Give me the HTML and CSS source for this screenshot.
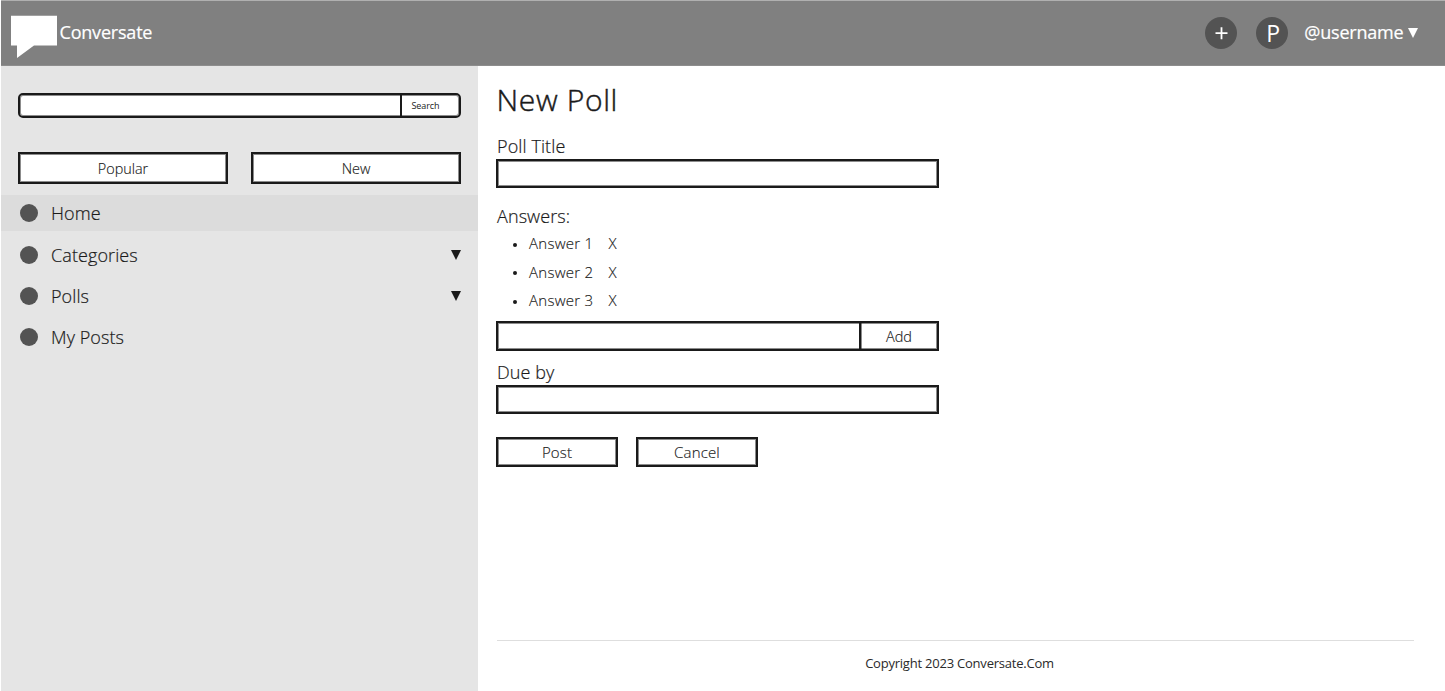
FILE: index.html
```html
<!DOCTYPE html>
<html lang="en">
<head>
<meta charset="utf-8">
<title>Conversate - New Poll</title>
<link rel="stylesheet" href="styles.css">
</head>
<body>
<header class="topbar">
  <svg class="logo" width="48" height="44" viewBox="0 0 48 44"><path d="M1 .7H47V30.5H24L7 43V30.5H1Z" fill="#fff"/></svg>
  <span class="brand">Conversate</span>
  <span class="round add-icon"><svg width="32" height="32" viewBox="0 0 32 32"><path d="M10.5 16.2H22.5M16.5 10.2V22.2" stroke="#fff" stroke-width="1.8"/></svg></span>
  <span class="round avatar">P</span>
  <span class="user">@username</span>
  <svg class="caret" width="10" height="10" viewBox="0 0 10 10"><path d="M0 0H10L5 10Z" fill="#fff"/></svg>
</header>
<div class="layout">
  <aside class="sidebar">
    <div class="search box"><div class="search-field"></div><div class="search-btn">Search</div></div>
    <div class="tabs"><div class="box tab">Popular</div><div class="box tab">New</div></div>
    <nav class="nav">
      <div class="item active"><i class="dot"></i><span>Home</span></div>
      <div class="item"><i class="dot"></i><span>Categories</span><svg class="arrow" width="10" height="10" viewBox="0 0 10 10"><path d="M0 0H10L5 10Z" fill="#1a1a1a"/></svg></div>
      <div class="item"><i class="dot"></i><span>Polls</span><svg class="arrow" width="10" height="10" viewBox="0 0 10 10"><path d="M0 0H10L5 10Z" fill="#1a1a1a"/></svg></div>
      <div class="item"><i class="dot"></i><span>My Posts</span></div>
    </nav>
  </aside>
  <main class="main">
    <h1 class="title">New Poll</h1>
    <div class="label title-label">Poll Title</div>
    <div class="box field"></div>
    <div class="label answers-label">Answers:</div>
    <ul class="answers">
      <li><i></i><span class="answer">Answer 1</span><span>X</span></li>
      <li><i></i><span class="answer">Answer 2</span><span>X</span></li>
      <li><i></i><span class="answer">Answer 3</span><span>X</span></li>
    </ul>
    <div class="box add-row"><div class="add-field"></div><div class="add-btn">Add</div></div>
    <div class="label due-label">Due by</div>
    <div class="box field"></div>
    <div class="actions"><div class="box action">Post</div><div class="box action">Cancel</div></div>
    <footer class="footer">Copyright 2023 Conversate.Com</footer>
  </main>
</div>
</body>
</html>
```
FILE: styles.css
```css
* { box-sizing: border-box; }
body { margin: 0; width: 1445px; height: 691px; overflow: hidden; background: #fff; color: #1a1a1a; font-family: "Open Sans", sans-serif; font-weight: 300; }
.topbar { height: 66px; margin-left: 1px; background: #808080; border-top: 1px solid #b0b0b0; border-bottom: 1px solid #8d8d8d; display: flex; align-items: flex-start; padding: 0 27.5px 0 9px; color: #fff; font-weight: 400; }
.logo { margin-top: 14px; }
.brand, .user { font-size: 18px; line-height: 26px; margin-top: 18px; letter-spacing: -.2px; -webkit-text-stroke: .2px #fff; }
.brand { margin-left: 1.5px; }
.round { width: 32px; height: 32px; border-radius: 50%; background: #535353; margin-top: 16px; }
.add-icon { margin-left: auto; }
.avatar { margin-left: 19.5px; font-size: 23px; line-height: 33px; text-align: center; padding-left: 2px; }
.user { margin-left: 16px; }
.caret { margin: 27px 0 0 4px; }
.layout { display: flex; height: 625px; }
.sidebar { width: 477px; margin-left: 1px; background: #e5e5e5; }
.box { background: #fff; border: 2px solid #1a1a1a; box-shadow: inset 0 0 0 1px rgba(26,26,26,.5); }
.search { display: flex; margin: 27.4px 17px 0; height: 25px; border-radius: 5px; }
.search-field { flex: 1; }
.search-btn { width: 59.5px; border-left: 2px solid #1a1a1a; padding-left: 10px; font-size: 9px; line-height: 21px; font-weight: 400; letter-spacing: -.1px; }
.tabs { display: flex; gap: 23px; margin: 33.6px 17px 0; }
.tab { flex: 1; height: 32px; font-size: 14.4px; line-height: 29px; text-align: center; }
.tab, .add-btn, .action, .answers { -webkit-text-stroke: .15px #1a1a1a; }
.nav { margin-top: 11px; display: grid; gap: 5px; }
.item { height: 36.4px; display: flex; align-items: center; font-size: 18px; letter-spacing: .09px; padding: 0 17.5px 0 19px; -webkit-text-stroke: .2px #1a1a1a; }
.item.active { background: #dcdcdc; }
.dot { width: 18px; height: 18px; border-radius: 50%; background: #535353; margin-right: 13px; }
.arrow { margin-left: auto; }
.main { width: 936px; padding-left: 19px; display: flex; flex-direction: column; }
.title { margin: 14px 0 0 -.5px; font-size: 30px; line-height: 40px; font-weight: 300; letter-spacing: .65px; -webkit-text-stroke: .45px #1a1a1a; }
.label { font-size: 18px; line-height: 24px; letter-spacing: .1px; -webkit-text-stroke: .2px #1a1a1a; }
.title-label { margin-top: 14px; }
.field { width: 443px; height: 29px; margin: 1px 0 0 -1px; }
.answers-label { margin-top: 16px; }
.answers { list-style: none; margin: 1px 0 0; padding: 0; font-size: 15px; letter-spacing: .28px; }
.answers li { display: flex; align-items: center; height: 28.5px; padding-left: 16px; }
.answers i { width: 4px; height: 4px; border-radius: 50%; background: #1a1a1a; margin: 3px 12px 0 0; }
.answer { width: 79.5px; }
.add-row { display: flex; width: 443px; height: 30px; margin: 6px 0 0 -1px; }
.add-field { flex: 1; }
.add-btn { width: 78px; border-left: 2px solid #1a1a1a; box-shadow: inset 1px 0 rgba(26,26,26,.5); font-size: 14.5px; line-height: 27px; text-align: center; }
.due-label { margin-top: 9px; }
.actions { display: flex; gap: 18px; margin: 23px 0 0 -1px; }
.action { width: 122px; height: 30px; font-size: 15px; letter-spacing: .15px; line-height: 27px; text-align: center; }
.footer { margin-top: auto; height: 51px; border-top: 1px solid #dedede; padding: 12px 0 0 8px; text-align: center; color: #2a2a2a; font-size: 13px; line-height: 20px; font-weight: 400; letter-spacing: -.22px; }
```
